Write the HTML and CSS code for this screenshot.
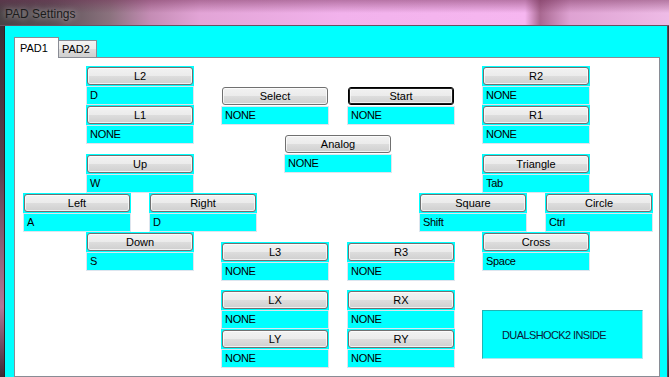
FILE: index.html
```html
<!DOCTYPE html>
<html lang="en">

<head>
    <meta charset="UTF-8">
    <meta name="viewport" content="width=device-width, initial-scale=1.0">
    <title>PAD Settings</title>
    <link rel="stylesheet" href="styles.css">
</head>

<body>

    <div class="window">

        <!-- Title bar -->
        <div class="titlebar">
            <span class="title">PAD Settings</span>
        </div>

        <div class="frame">
            <div class="client">

                <!-- Tabs -->
                <div class="tabs">
                    <div class="tab active">PAD1</div>
                    <div class="tab">PAD2</div>
                </div>

                <div class="pane">
                    <div class="pad-layout">

                        <!-- Left side: shoulders + d-pad -->
                        <div class="cluster cluster-left">
                            <div class="key">
                                <div class="key-btn"><button>L2</button></div>
                                <div class="key-value">D</div>
                            </div>
                            <div class="key">
                                <div class="key-btn"><button>L1</button></div>
                                <div class="key-value">NONE</div>
                            </div>
                            <div class="key up-key">
                                <div class="key-btn"><button>Up</button></div>
                                <div class="key-value">W</div>
                            </div>
                            <div class="pair">
                                <div class="key">
                                    <div class="key-btn"><button>Left</button></div>
                                    <div class="key-value">A</div>
                                </div>
                                <div class="key">
                                    <div class="key-btn"><button>Right</button></div>
                                    <div class="key-value">D</div>
                                </div>
                            </div>
                            <div class="key">
                                <div class="key-btn"><button>Down</button></div>
                                <div class="key-value">S</div>
                            </div>
                        </div>

                        <!-- Middle: select/start + sticks -->
                        <div class="cluster cluster-mid">
                            <div class="pair">
                                <div class="key plain">
                                    <div class="key-btn"><button>Select</button></div>
                                    <div class="key-value">NONE</div>
                                </div>
                                <div class="key plain">
                                    <div class="key-btn"><button class="default">Start</button></div>
                                    <div class="key-value">NONE</div>
                                </div>
                            </div>
                            <div class="key plain analog-key">
                                <div class="key-btn"><button>Analog</button></div>
                                <div class="key-value">NONE</div>
                            </div>
                            <div class="pair stick-row">
                                <div class="key">
                                    <div class="key-btn"><button>L3</button></div>
                                    <div class="key-value">NONE</div>
                                </div>
                                <div class="key">
                                    <div class="key-btn"><button>R3</button></div>
                                    <div class="key-value">NONE</div>
                                </div>
                            </div>
                            <div class="pair axis-row">
                                <div class="key">
                                    <div class="key-btn"><button>LX</button></div>
                                    <div class="key-value">NONE</div>
                                </div>
                                <div class="key">
                                    <div class="key-btn"><button>RX</button></div>
                                    <div class="key-value">NONE</div>
                                </div>
                            </div>
                            <div class="pair">
                                <div class="key">
                                    <div class="key-btn"><button>LY</button></div>
                                    <div class="key-value">NONE</div>
                                </div>
                                <div class="key">
                                    <div class="key-btn"><button>RY</button></div>
                                    <div class="key-value">NONE</div>
                                </div>
                            </div>
                        </div>

                        <!-- Right side: shoulders + face buttons -->
                        <div class="cluster cluster-right">
                            <div class="key">
                                <div class="key-btn"><button>R2</button></div>
                                <div class="key-value">NONE</div>
                            </div>
                            <div class="key">
                                <div class="key-btn"><button>R1</button></div>
                                <div class="key-value">NONE</div>
                            </div>
                            <div class="key up-key">
                                <div class="key-btn"><button>Triangle</button></div>
                                <div class="key-value">Tab</div>
                            </div>
                            <div class="pair">
                                <div class="key">
                                    <div class="key-btn"><button>Square</button></div>
                                    <div class="key-value">Shift</div>
                                </div>
                                <div class="key">
                                    <div class="key-btn"><button>Circle</button></div>
                                    <div class="key-value">Ctrl</div>
                                </div>
                            </div>
                            <div class="key">
                                <div class="key-btn"><button>Cross</button></div>
                                <div class="key-value">Space</div>
                            </div>
                            <div class="badge">DUALSHOCK2 INSIDE</div>
                        </div>

                    </div>
                </div>

            </div>
        </div>
    </div>

</body>

</html>
```

FILE: styles.css
```css
* {
    margin: 0;
    padding: 0;
    box-sizing: border-box;
    font-family: "Liberation Sans", Arial, sans-serif;
}

body {
    width: 669px;
    height: 377px;
    overflow: hidden;
    background-color: #4b4447;
}

.window {
    display: flex;
    flex-direction: column;
    height: 377px;
}

/* Title bar (blurred glass) */
.titlebar {
    height: 26px;
    padding: 3px 0 0 5px;
    display: flex;
    align-items: center;
    border-bottom: 1px solid #6a5262;
    background:
        linear-gradient(to bottom, rgba(110, 40, 80, 0.45) 0, rgba(110, 40, 80, 0) 13px),
        linear-gradient(to right, #4a4346 0, #5a5055 50px, #8b727e 110px, #c48cb4 150px, #e2a4d6 200px, #f2b2ec 340px, #f6b6f0 525px, #a86890 540px, #dea2d2 570px, #eebbe6 669px);
}

.title {
    font-size: 12px;
    color: #1b1b1b;
    text-shadow: 0 0 6px rgba(255, 255, 255, 0.7);
}

/* Window frame */
.frame {
    flex: 1;
    display: flex;
    padding: 0 1px 0 4px;
    background: linear-gradient(to bottom, #3c2f35 0%, #5a3f4c 40%, #b07898 80%, #3a2a32 100%);
}

.client {
    flex: 1;
    display: flex;
    flex-direction: column;
    background-color: #00ffff;
    border-left: 1px solid #2a2226;
    border-right: 1px solid #56485a;
    padding: 11px 7px 0 9px;
}

/* Tabs */
.tabs {
    display: flex;
    align-items: flex-end;
    height: 20px;
}

.tab {
    font-size: 11px;
    color: #000;
    border: 1px solid #898c95;
    border-bottom: none;
    line-height: 14px;
}

.tab.active {
    position: relative;
    z-index: 1;
    width: 45px;
    height: 21px;
    margin-bottom: -1px;
    padding: 3px 0 0 5px;
    background: white;
}

.tab:not(.active) {
    width: 39px;
    height: 17px;
    margin-left: -1px;
    padding: 1px 0 0 3px;
    background: linear-gradient(to bottom, #f3f3f3 0%, #ebebeb 50%, #dddddd 51%, #cfcfcf 100%);
}

.pane {
    flex: 1;
    background: white;
    border: 1px solid #898c95;
    padding: 8px 0 0 8px;
}

/* Layout of the pad */
.pad-layout {
    display: grid;
    grid-template-columns: 198px 36px 162px 36px 198px;
}

.cluster {
    grid-row: 1;
    display: flex;
    flex-direction: column;
    align-items: center;
}

.cluster-left {
    grid-column: 1 / 3;
}

.cluster-mid {
    grid-column: 2 / 5;
    padding-top: 20px;
}

.cluster-right {
    grid-column: 4 / 6;
}

.pair {
    display: flex;
    justify-content: space-between;
    align-self: stretch;
}

.up-key {
    margin-top: 10px;
}

.analog-key {
    margin-top: 9px;
}

.stick-row {
    margin-top: 69px;
}

.axis-row {
    margin-top: 9px;
}

/* Key binding group */
.key {
    width: 108px;
    display: flex;
    flex-direction: column;
}

.key-btn {
    padding: 1px;
    background-color: #00ffff;
}

.key.plain .key-btn {
    background-color: white;
}

.key-btn button {
    display: block;
    width: 106px;
    height: 18px;
    font-size: 11px;
    line-height: 14px;
    color: #000;
    border: 1px solid #707070;
    border-radius: 3px;
    background: linear-gradient(to bottom, #f2f2f2 0%, #ebebeb 50%, #dddddd 51%, #cfcfcf 100%);
    box-shadow: inset 0 0 0 1px rgba(255, 255, 255, 0.7);
}

.key-btn button.default {
    border-color: #000;
    box-shadow: inset 0 0 0 1px #1a1a1a, inset 0 0 0 2px rgba(255, 255, 255, 0.6);
}

.key-value {
    height: 19px;
    border: 1px solid #dde5ee;
    background-color: #00ffff;
    font-size: 11px;
    line-height: 17px;
    letter-spacing: -0.3px;
    padding-left: 3px;
    color: #000;
}

/* DualShock badge */
.badge {
    align-self: flex-start;
    margin: 39px 0 0 63px;
    width: 161px;
    height: 49px;
    display: flex;
    align-items: center;
    padding-left: 19px;
    background-color: #00ffff;
    border: 1px solid;
    border-color: #20b4b4 #a8e8f0 #a8e8f0 #20b4b4;
    font-size: 11px;
    letter-spacing: -0.6px;
    color: #0c1838;
}
```
